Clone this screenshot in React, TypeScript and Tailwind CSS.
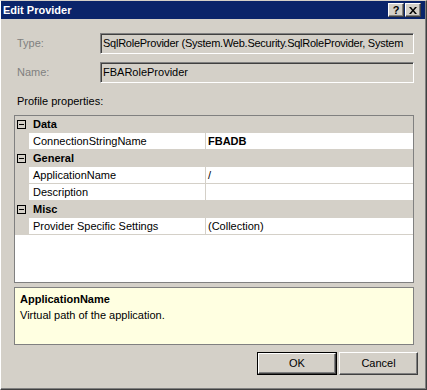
import React from 'react';

const font = "font-['Liberation_Sans',Arial,sans-serif]";

const MinusBox = () => (
  <svg width="9" height="9" viewBox="0 0 9 9" className="shrink-0">
    <rect x="0.5" y="0.5" width="8" height="8" fill="none" stroke="#000" />
    <line x1="2" y1="4.5" x2="7" y2="4.5" stroke="#000" />
  </svg>
);

const Category = ({ label }: { label: string }) => (
  <div className="h-[17px] bg-[#D4D0C8] flex items-center pl-[2px]">
    <MinusBox />
    <span className="pl-[7px] font-bold text-[11px] text-black">{label}</span>
  </div>
);

const Prop = ({ name, value, bold }: { name: string; value?: string; bold?: boolean }) => (
  <div className="h-[17px] flex">
    <div className="w-[14px] bg-[#D4D0C8]" />
    <div className="w-[177px] bg-white border-b border-r border-[#D4D0C8] pl-[4px] flex items-center text-[11px] text-black whitespace-nowrap">
      {name}
    </div>
    <div className={`flex-1 bg-white border-b border-[#D4D0C8] pl-[2px] flex items-center text-[11px] text-black ${bold ? 'font-bold' : ''}`}>
      {value}
    </div>
  </div>
);

const Field = ({ label, value, tight }: { label: string; value: string; tight?: boolean }) => (
  <div className="flex items-center h-[21px]">
    <div className="w-[86px] pl-[3px] text-[11px] text-[#808080]">{label}</div>
    <div className={`flex-1 h-[21px] border border-t-[#808080] border-l-[#808080] border-b-white border-r-white shadow-[inset_1px_1px_0_#404040] flex items-center pl-[2px] overflow-hidden whitespace-nowrap text-[11px] text-black ${tight ? 'tracking-[-0.25px]' : ''}`}>
      {value}
    </div>
  </div>
);

const TitleButton = ({ children }: { children: React.ReactNode }) => (
  <div className="w-[16px] h-[14px] bg-[#D4D0C8] border border-t-white border-l-white border-b-[#404040] border-r-[#404040] shadow-[inset_-1px_-1px_0_#808080] flex items-center justify-center">
    {children}
  </div>
);

const Button = ({ label, primary }: { label: string; primary?: boolean }) => (
  <div className={`h-[23px] ${primary ? 'w-[80px] border border-black' : 'w-[79px]'}`}>
    <div className="h-full w-full bg-[#D4D0C8] border border-t-white border-l-white border-b-[#404040] border-r-[#404040] shadow-[inset_-1px_-1px_0_#808080] flex items-center justify-center text-[11px] text-black">
      {label}
    </div>
  </div>
);

export default function App() {
  return (
    <div className={`${font} w-[427px] h-[390px] bg-[#D4D0C8] border-l border-t border-l-white border-t-[#D4D0C8] border-r border-b border-r-[#404040] border-b-[#404040]`}>
      <div className="h-full border-r border-b border-[#808080] flex flex-col">
        {/* title bar */}
        <div className="h-[18px] bg-[#0A246A] flex items-center pl-[2px] pr-[4px]">
          <span className="text-white font-bold text-[11px] flex-1">Edit Provider</span>
          <div className="flex gap-[1px]">
            <TitleButton>
              <span className="font-bold text-[11px] leading-none text-black">?</span>
            </TitleButton>
            <TitleButton>
              <svg width="8" height="7" viewBox="0 0 8 7">
                <path d="M0 0h2l2 2.5L6 0h2L5 3.5 8 7H6L4 4.5 2 7H0l3-3.5z" fill="#000" />
              </svg>
            </TitleButton>
          </div>
        </div>

        <div className="flex-1 pl-[13px] pr-[11px] pt-[14px] flex flex-col">
          <Field label="Type:" value="SqlRoleProvider (System.Web.Security.SqlRoleProvider, System" tight />
          <div className="mt-[8px]">
            <Field label="Name:" value="FBARoleProvider" />
          </div>
          <div className="mt-[12px] pl-[3px] text-[11px] leading-[13px] text-black">Profile properties:</div>

          {/* property grid */}
          <div className="mt-[7px] h-[168px] border border-[#808080] bg-white flex flex-col">
            <Category label="Data" />
            <Prop name="ConnectionStringName" value="FBADB" bold />
            <Category label="General" />
            <Prop name="ApplicationName" value="/" />
            <Prop name="Description" />
            <Category label="Misc" />
            <Prop name="Provider Specific Settings" value="(Collection)" />
          </div>

          {/* help box */}
          <div className="mt-[4px] h-[58px] border border-[#808080] bg-[#FFFFE1] pl-[5px] pt-[3px] text-[11px] text-black leading-[16px]">
            <div className="font-bold">ApplicationName</div>
            <div>Virtual path of the application.</div>
          </div>

          <div className="mt-[7px] flex justify-end gap-[2px] mr-[-4px]">
            <Button label="OK" primary />
            <Button label="Cancel" />
          </div>
        </div>
      </div>
    </div>
  );
}
